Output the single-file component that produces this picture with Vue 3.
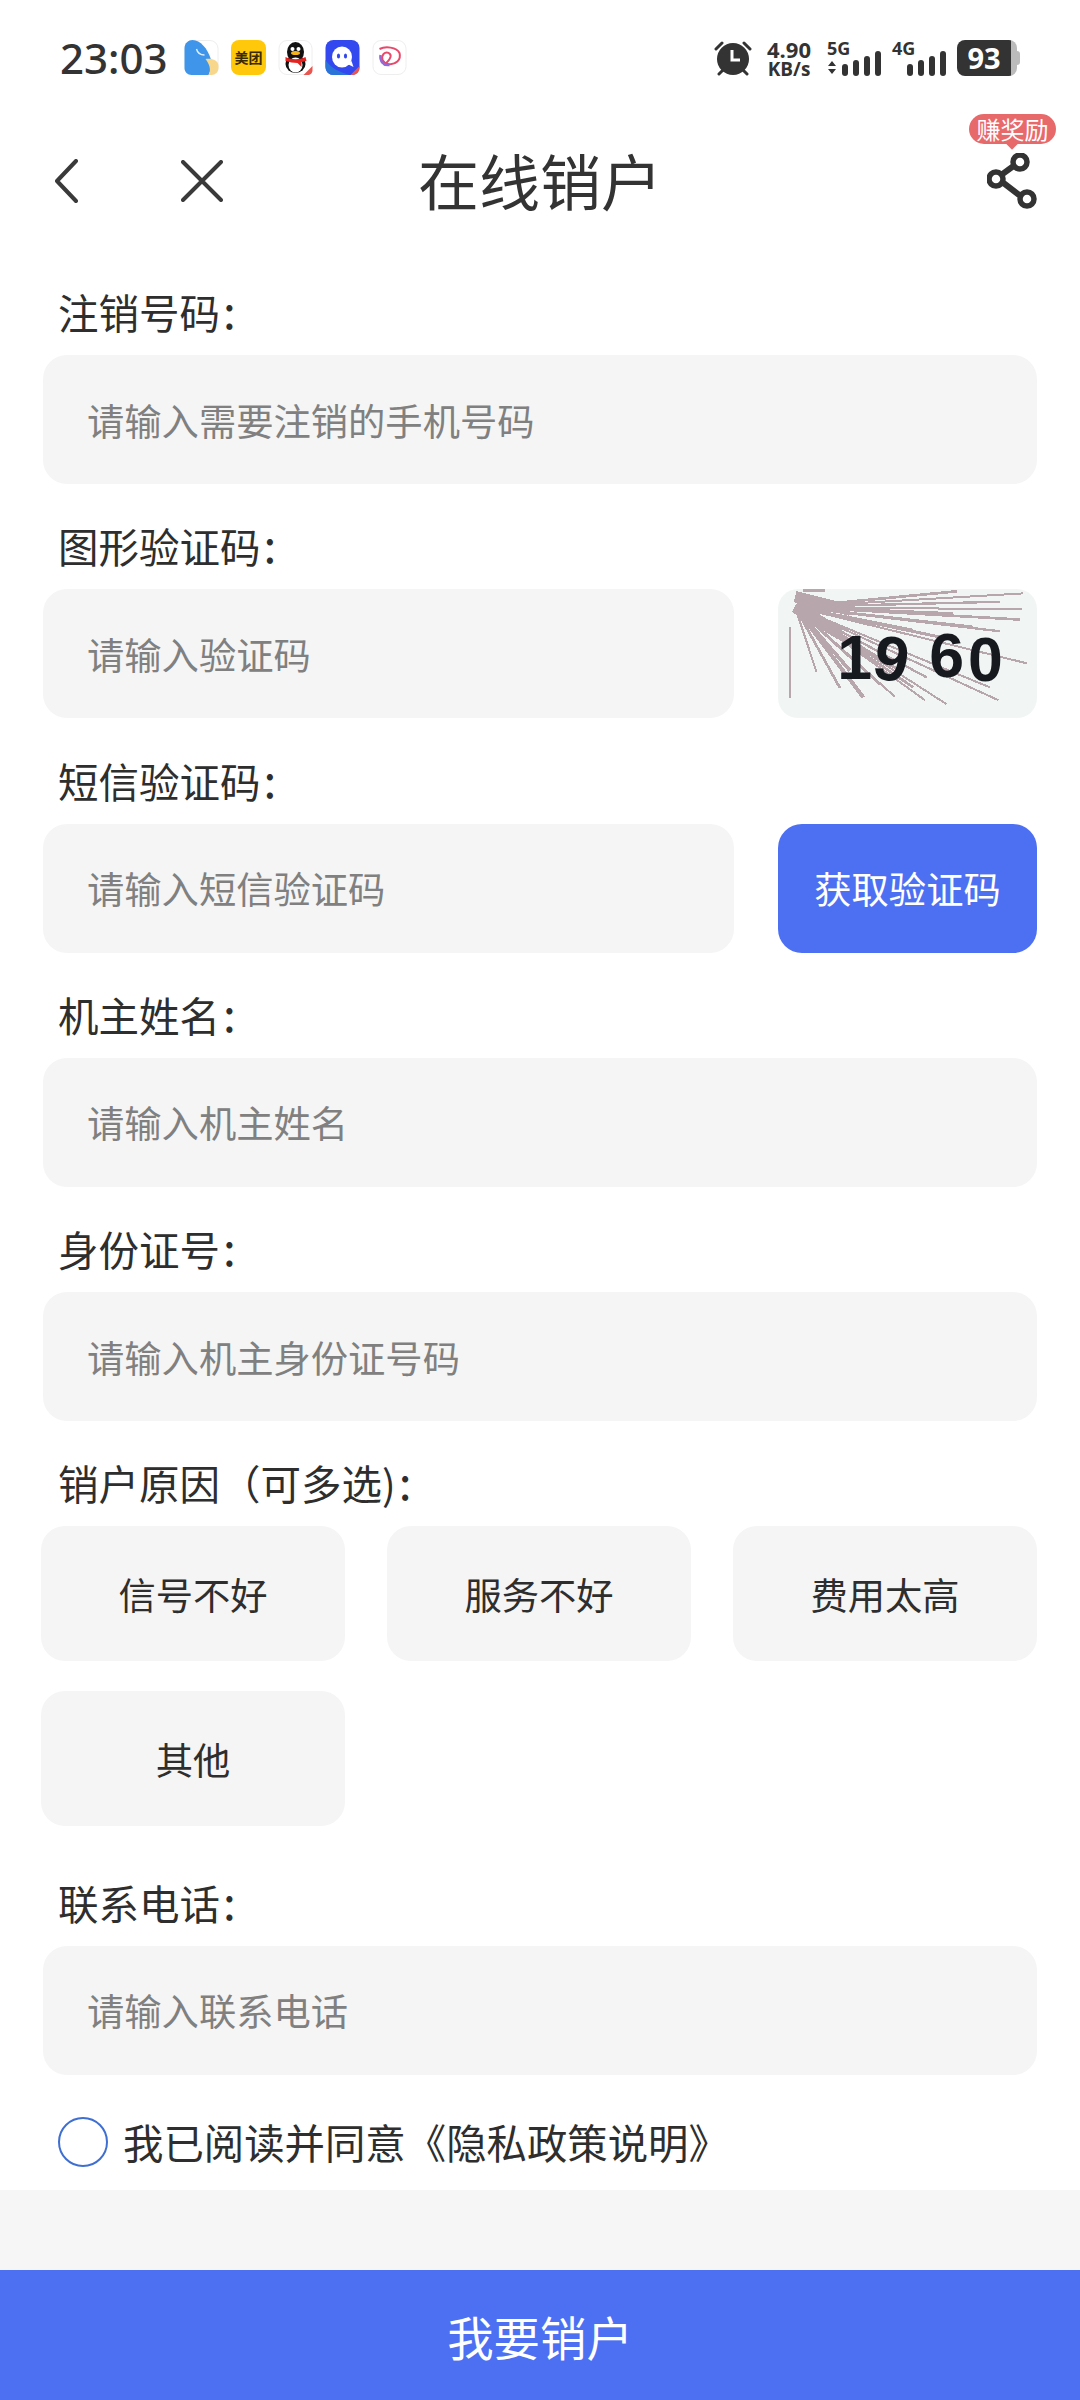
<script setup>
import { ref } from "vue";

const reasons = ["信号不好", "服务不好", "费用太高", "其他"];
const picked = ref([]);
const agreed = ref(false);

const toggleReason = (name) => {
  const idx = picked.value.indexOf(name);
  if (idx >= 0) picked.value.splice(idx, 1);
  else picked.value.push(name);
};

// noise rays of the captcha, all starting near the top left corner
const rays = [
  [850, 70, 6], [780, 95, 7], [845, 118, 6], [840, 148, 8], [780, 183, 7],
  [860, 278, 6], [775, 388, 6], [750, 350, 6], [620, 400, 6], [555, 388, 6],
  [465, 378, 6], [370, 380, 12], [300, 352, 8], [230, 305, 6],
  [650, 64, 8], [700, 170, 8], [600, 200, 9], [560, 320, 7], [520, 350, 8],
  [480, 300, 9], [420, 340, 9], [330, 300, 11], [520, 180, 9], [640, 130, 8],
];
</script>

<template>
  <div class="page">
    <div class="status-bar">
      <span class="clock">23:03</span>
      <div class="app-icons">
        <svg class="app" viewBox="0 0 34 35">
          <rect x=".5" y=".5" width="33" height="34" rx="8" fill="#fff" stroke="#eee" />
          <path d="M8 0c8 0 15 9 18 18 2 7 0 13-2 17H7c-4 0-7-3-7-7V8c0-5 4-8 8-8z" fill="#3f95ea" />
          <path d="M21 19c6-1 13 1 13 7v2c0 4-3 7-7 7h-3c3-5 1-11-3-16z" fill="#f6d78b" />
          <path d="M12 9c1 4 4 6 8 6" fill="none" stroke="#dff0ff" stroke-width="1.4" />
        </svg>
        <div class="app meituan">美团</div>
        <svg class="app" viewBox="0 0 34 35">
          <rect x=".5" y=".5" width="33" height="34" rx="8" fill="#fff" stroke="#eee" />
          <ellipse cx="17" cy="12" rx="8.500" ry="10" fill="#111" />
          <ellipse cx="17" cy="24" rx="10" ry="9" fill="#111" />
          <ellipse cx="17" cy="25" rx="7" ry="7.500" fill="#fff" />
          <circle cx="14" cy="9" r="2" fill="#fff" />
          <circle cx="20" cy="9" r="2" fill="#fff" />
          <ellipse cx="17" cy="13" rx="4.500" ry="2" fill="#f6b21b" />
          <path d="M7 17c6 3 14 3 20 0l1 4-5 1v5l-4-4c-4 0-8-1-12-2z" fill="#e3231f" />
          <path d="M25 35l9-9v4c0 3-2 5-5 5z" fill="#e9564f" />
        </svg>
        <svg class="app" viewBox="0 0 34 35">
          <rect width="34" height="35" rx="8" fill="#3348ee" />
          <path d="M0 20c5 8 14 12 24 15H8c-4 0-8-3-8-8z" fill="#2a74d8" />
          <ellipse cx="16.500" cy="17" rx="10" ry="10.500" fill="#fff" />
          <path d="M22 24l6 3-2-6z" fill="#fff" />
          <ellipse cx="13" cy="16" rx="1.600" ry="2.600" fill="#3348ee" />
          <ellipse cx="20" cy="16" rx="1.600" ry="2.600" fill="#3348ee" />
          <path d="M25 35l9-9v2c0 4-3 7-7 7z" fill="#e9564f" />
        </svg>
        <svg class="app" viewBox="0 0 34 35">
          <rect x=".5" y=".5" width="33" height="34" rx="8" fill="#fff" stroke="#eee" />
          <path d="M7 9c6-3 17-2 20 4 2 7-4 12-11 11-6-1-8-6-5-10 3-3 8-1 7 3-1 3-4 6-7 8" fill="none" stroke="#e8486a" stroke-width="2" />
          <path d="M8 15c-1 6 3 11 9 10" fill="none" stroke="#8f6ad8" stroke-width="2.400" />
        </svg>
      </div>
      <div class="indicators">
        <svg class="alarm" viewBox="0 0 38 36">
          <path d="M2 9l6-6M36 9l-6-6" stroke="#333" stroke-width="3" stroke-linecap="round" />
          <path d="M5 34l5-5M33 34l-5-5" stroke="#333" stroke-width="3" stroke-linecap="round" />
          <circle cx="19" cy="19" r="16" fill="#333" />
          <path d="M18 10v10h8" fill="none" stroke="#fff" stroke-width="3" />
        </svg>
        <div class="speed">
          <b>4.90</b>
          <span>KB/s</span>
        </div>
        <div class="signal">
          <b>5G</b>
          <svg viewBox="0 0 56 36">
            <path d="M1 26l4-5 4 5zM1 29l4 5 4-5z" fill="#333" />
            <rect x="15" y="24" width="6" height="12" rx="3" fill="#333" />
            <rect x="26" y="20" width="6" height="16" rx="3" fill="#333" />
            <rect x="37" y="16" width="6" height="20" rx="3" fill="#333" />
            <rect x="48" y="11" width="6" height="25" rx="3" fill="#333" />
          </svg>
        </div>
        <div class="signal">
          <b>4G</b>
          <svg viewBox="0 0 56 36">
            <rect x="15" y="24" width="6" height="12" rx="3" fill="#333" />
            <rect x="26" y="20" width="6" height="16" rx="3" fill="#333" />
            <rect x="37" y="16" width="6" height="20" rx="3" fill="#333" />
            <rect x="48" y="11" width="6" height="25" rx="3" fill="#333" />
          </svg>
        </div>
        <div class="battery"><span>93</span></div>
      </div>
    </div>

    <header class="nav">
      <svg class="nav-back" viewBox="0 0 24 44">
        <path d="M22 2L3 22l19 20" fill="none" stroke="#3a3a3a" stroke-width="4" stroke-linecap="round" stroke-linejoin="round" />
      </svg>
      <svg class="nav-close" viewBox="0 0 42 42">
        <path d="M2 2l38 38M40 2L2 40" fill="none" stroke="#3a3a3a" stroke-width="4" stroke-linecap="round" />
      </svg>
      <h1>在线销户</h1>
      <div class="share">
        <span class="reward">赚奖励</span>
        <svg viewBox="0 0 52 58">
          <path d="M32 9L10 25l30 23" fill="none" stroke="#333" stroke-width="6" />
          <circle cx="33" cy="9" r="7" fill="#fff" stroke="#333" stroke-width="5.500" />
          <circle cx="9" cy="26" r="7" fill="#fff" stroke="#333" stroke-width="5.500" />
          <circle cx="40" cy="46" r="7" fill="#fff" stroke="#333" stroke-width="5.500" />
        </svg>
      </div>
    </header>

    <form class="form" @submit.prevent>
      <div class="field">
        <label>注销号码<span class="colon">:</span></label>
        <input placeholder="请输入需要注销的手机号码" />
      </div>
      <div class="field">
        <label>图形验证码<span class="colon">:</span></label>
        <div class="row">
          <input placeholder="请输入验证码" />
          <svg class="captcha" viewBox="114 57 777 384" preserveAspectRatio="none">
            <rect x="114" y="57" width="777" height="384" fill="#f1f6f5" />
            <g shape-rendering="crispEdges" stroke="#b8a6ad">
              <line v-for="(r, i) in rays" :key="i" x1="165" y1="110" :x2="r[0]" :y2="r[1]" :stroke-width="r[2]" />
              <line x1="190" y1="62" x2="255" y2="62" stroke-width="9" />
              <line x1="150" y1="170" x2="150" y2="380" stroke-width="8" />
              <line x1="165" y1="80" x2="330" y2="120" stroke-width="34" />
              <line x1="165" y1="110" x2="300" y2="190" stroke-width="36" />
            </g>
            <text class="captcha-code" x="292" y="326">1</text>
            <text class="captcha-code" x="400" y="330" transform="rotate(10 455 275)">9</text>
            <text class="captcha-code" x="568" y="318">6</text>
            <text class="captcha-code" x="684" y="331">0</text>
          </svg>
        </div>
      </div>
      <div class="field">
        <label>短信验证码<span class="colon">:</span></label>
        <div class="row">
          <input placeholder="请输入短信验证码" />
          <button type="button" class="code-btn">获取验证码</button>
        </div>
      </div>
      <div class="field">
        <label>机主姓名<span class="colon">:</span></label>
        <input placeholder="请输入机主姓名" />
      </div>
      <div class="field">
        <label>身份证号<span class="colon">:</span></label>
        <input placeholder="请输入机主身份证号码" />
      </div>
      <div class="field">
        <label>销户原因（可多选)<span class="colon">:</span></label>
        <div class="reasons">
          <button
            v-for="item in reasons"
            :key="item"
            type="button"
            class="reason"
            :class="{ active: picked.includes(item) }"
            @click="toggleReason(item)"
          >
            {{ item }}
          </button>
        </div>
      </div>
      <div class="field contact">
        <label>联系电话<span class="colon">:</span></label>
        <input placeholder="请输入联系电话" />
      </div>
      <div class="agree" @click="agreed = !agreed">
        <span class="tick" :class="{ on: agreed }"></span>
        <span>我已阅读并同意《隐私政策说明》</span>
      </div>
    </form>

    <div class="spacer"></div>
    <button type="button" class="submit">我要销户</button>
  </div>
</template>

<style>
html,
body {
  margin: 0;
  background: #fff;
}
</style>

<style scoped>
.page {
  width: 1080px;
  height: 2400px;
  display: flex;
  flex-direction: column;
  background: #fff;
  color: #333;
  font-family: "Noto Sans CJK SC", "Noto Sans", sans-serif;
  overflow: hidden;
}

.status-bar {
  height: 116px;
  box-sizing: border-box;
  padding: 36px 60px 0 60px;
  display: flex;
  align-items: flex-start;
}

.clock {
  font-family: "Noto Sans", sans-serif;
  font-size: 42px;
  font-weight: 500;
  line-height: 44px;
  width: 124px;
  color: #333;
}

.app-icons {
  display: flex;
  gap: 12px;
  margin-top: 4px;
}

.app {
  width: 35px;
  height: 35px;
  display: block;
}

.meituan {
  background: #ffc80a;
  border-radius: 8px;
  color: #3a2a00;
  font-size: 14px;
  font-weight: 700;
  line-height: 35px;
  text-align: center;
}

.indicators {
  margin-left: auto;
  display: flex;
  align-items: flex-start;
  margin-top: 2px;
}

.alarm {
  width: 38px;
  height: 36px;
  margin-top: 2px;
  margin-right: 13px;
}

.speed {
  width: 48px;
  text-align: center;
  font-family: "Open Sans", sans-serif;
  color: #333;
  margin-right: 14px;
}

.speed b {
  display: block;
  font-size: 22px;
  line-height: 22px;
}

.speed span {
  display: block;
  font-size: 19px;
  font-weight: 700;
  line-height: 18px;
}

.signal {
  position: relative;
  width: 56px;
  height: 38px;
  margin-right: 9px;
}

.signal b {
  position: absolute;
  top: -1px;
  left: 0;
  font-family: "Open Sans", sans-serif;
  font-size: 18px;
  line-height: 22px;
}

.signal svg {
  width: 56px;
  height: 36px;
  display: block;
  margin-top: 2px;
}

.battery {
  position: relative;
  width: 60px;
  height: 36px;
  margin-top: 2px;
  margin-right: 3px;
  box-sizing: border-box;
  border-radius: 8px;
  background: linear-gradient(90deg, #333 54px, #bbb 54px);
  text-align: center;
  padding-right: 6px;
}

.battery::after {
  content: "";
  position: absolute;
  right: -3px;
  top: 11px;
  width: 3px;
  height: 14px;
  border-radius: 0 3px 3px 0;
  background: #bbb;
}

.battery span {
  color: #fff;
  font-family: "Open Sans", sans-serif;
  font-weight: 700;
  font-size: 29px;
  line-height: 36px;
}

.nav {
  position: relative;
  height: 132px;
  display: flex;
  align-items: center;
  justify-content: center;
}

.nav h1 {
  margin: 0 0 4px;
  font-size: 61px;
  font-weight: 400;
  line-height: 80px;
  color: #333;
}

.nav-back {
  position: absolute;
  left: 54px;
  top: 43px;
  width: 24px;
  height: 44px;
}

.nav-close {
  position: absolute;
  left: 181px;
  top: 44px;
  width: 42px;
  height: 42px;
}

.share {
  position: absolute;
  left: 969px;
  top: -2px;
  width: 87px;
}

.share svg {
  position: absolute;
  left: 18px;
  top: 39px;
  width: 52px;
  height: 58px;
}

.reward {
  position: absolute;
  top: 0;
  left: 0;
  width: 87px;
  height: 30px;
  border-radius: 15px;
  background: #e8696a;
  color: #fff;
  font-size: 24px;
  line-height: 30px;
  text-align: center;
}

.reward::after {
  content: "";
  position: absolute;
  left: 39px;
  bottom: -4px;
  width: 8px;
  height: 8px;
  background: #e8696a;
  transform: rotate(45deg);
}

.form {
  padding: 25px 43px 0;
}

.field {
  margin-bottom: 23.300px;
}

.field label {
  display: block;
  height: 72px;
  margin-bottom: 10px;
  padding-left: 15px;
  font-size: 40.500px;
  line-height: 72px;
  color: #2e2e2e;
}

.colon {
  margin-left: 3px;
  font-size: 46px;
}

.field input {
  display: block;
  width: 100%;
  height: 129px;
  box-sizing: border-box;
  padding: 0 44px;
  border: none;
  outline: none;
  border-radius: 24px;
  background: #f5f5f5;
  font: inherit;
  font-size: 37.300px;
  color: #333;
}

.field input::placeholder {
  color: #808080;
  opacity: 1;
}

.row {
  display: flex;
  gap: 44px;
}

.row input {
  flex: 1;
  min-width: 0;
}

.captcha {
  flex: none;
  width: 259px;
  height: 129px;
  display: block;
  border-radius: 20px;
  overflow: hidden;
}

.captcha-code {
  font-family: "Liberation Sans", sans-serif;
  font-weight: 700;
  font-size: 188px;
  fill: #16191d;
}

.code-btn {
  flex: none;
  width: 259px;
  height: 129px;
  border: none;
  border-radius: 24px;
  background: #4d70f3;
  color: #fff;
  font: inherit;
  font-size: 37.300px;
  padding: 0;
}

.reasons {
  margin-left: -2px;
  display: grid;
  grid-template-columns: repeat(3, 304px);
  column-gap: 42px;
  row-gap: 30px;
}

.reason {
  height: 135px;
  border: none;
  border-radius: 24px;
  background: #f5f5f5;
  color: #2e2e2e;
  font: inherit;
  font-size: 37.300px;
  padding: 0;
}

.reason.active {
  background: #4d70f3;
  color: #fff;
}

.contact {
  margin-top: 37.500px;
  margin-bottom: 0;
}

.agree {
  display: flex;
  align-items: center;
  height: 66px;
  margin-top: 34px;
  padding-left: 15px;
  font-size: 40.400px;
  color: #2e2e2e;
}

.tick {
  width: 50px;
  height: 50px;
  box-sizing: border-box;
  border: 2px solid #3f6fd1;
  border-radius: 50%;
  margin-right: 15px;
  flex: none;
}

.tick.on {
  background: #4d70f3;
}

.spacer {
  flex: 1;
  background: #f6f6f6;
  margin-top: 15px;
}

.submit {
  flex: none;
  height: 130px;
  border: none;
  background: #4d70f3;
  color: #fff;
  font: inherit;
  font-size: 46.400px;
  padding: 0;
}
</style>
